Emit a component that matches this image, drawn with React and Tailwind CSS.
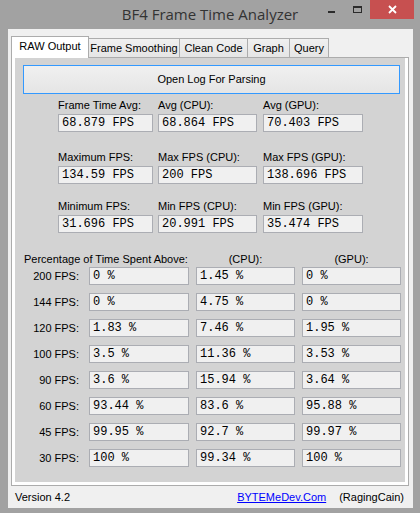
import React from 'react';

const STATS = [
  [
    ['Frame Time Avg:', '68.879 FPS'],
    ['Avg (CPU):', '68.864 FPS'],
    ['Avg (GPU):', '70.403 FPS'],
  ],
  [
    ['Maximum FPS:', '134.59 FPS'],
    ['Max FPS (CPU):', '200 FPS'],
    ['Max FPS (GPU):', '138.696 FPS'],
  ],
  [
    ['Minimum FPS:', '31.696 FPS'],
    ['Min FPS (CPU):', '20.991 FPS'],
    ['Min FPS (GPU):', '35.474 FPS'],
  ],
];

// spacing above each stats row
const ROW_MARGINS = ['mt-[3px]', 'mt-[17px]', 'mt-[14px]'];
const COL_WIDTHS = ['w-[95px]', 'w-[99px]', 'w-[100px]'];
const COL_GAPS = ['ml-[43px]', 'ml-[5px]', 'ml-[6px]'];

const PERCENTS = [
  ['200 FPS:', '0 %', '1.45 %', '0 %'],
  ['144 FPS:', '0 %', '4.75 %', '0 %'],
  ['120 FPS:', '1.83 %', '7.46 %', '1.95 %'],
  ['100 FPS:', '3.5 %', '11.36 %', '3.53 %'],
  ['90 FPS:', '3.6 %', '15.94 %', '3.64 %'],
  ['60 FPS:', '93.44 %', '83.6 %', '95.88 %'],
  ['45 FPS:', '99.95 %', '92.7 %', '99.97 %'],
  ['30 FPS:', '100 %', '99.34 %', '100 %'],
];

const TABS = [
  { name: 'Frame Smoothing', w: 'w-[92px]' },
  { name: 'Clean Code', w: 'w-[69px]' },
  { name: 'Graph', w: 'w-[43px]' },
  { name: 'Query', w: 'w-[40px]' },
];

function ReadBox({ value, className = '' }) {
  return (
    <div
      className={`h-[18px] flex items-center border border-[#abadb3] bg-[#f0f0f0] pl-[3px] font-['Liberation_Mono',monospace] text-[12px] text-black whitespace-pre ${className}`}
    >
      {value}
    </div>
  );
}

function WindowButtons() {
  return (
    <div className="absolute top-0 right-[6px] flex h-[19px]">
      <div className="w-[25px] flex justify-center">
        <div className="mt-[11px] w-[7px] h-[2px] bg-[#2b2b2b]"></div>
      </div>
      <div className="w-[26px] flex justify-center">
        <div className="mt-[6px] w-[9px] h-[7px] border border-t-2 border-[#2b2b2b]"></div>
      </div>
      <div className="w-[44px] h-[19px] bg-[#c75050] flex items-center justify-center">
        <svg width="9" height="9" viewBox="0 0 9 9">
          <path d="M1 1 L8 8 M8 1 L1 8" stroke="#fff" strokeWidth="1.8" />
        </svg>
      </div>
    </div>
  );
}

export default function App() {
  return (
    <div className="w-[420px] h-[513px] bg-[#a2a2a2] flex flex-col font-['Liberation_Sans',Arial,sans-serif] text-[11px] text-black">
      {/* Title bar */}
      <div className="relative h-[29px] flex justify-center">
        <div className="pt-[4px] text-[15px] leading-[20px] text-[#333] font-['Open_Sans','Noto_Sans',sans-serif]">
          BF4 Frame Time Analyzer
        </div>
        <WindowButtons />
      </div>

      {/* Client area */}
      <div className="ml-[8px] w-[405px] h-[479px] bg-[#f0f0f0] pt-[7px] flex flex-col">
        {/* Tab strip */}
        <div className="ml-[3px] h-[21px] flex items-end">
          <div className="relative z-10 w-[78px] h-[22px] -mb-px bg-white border border-b-0 border-[#acacac] flex items-center justify-center pb-[2px]">
            RAW Output
          </div>
          {TABS.map(tab => (
            <div
              key={tab.name}
              className={`${tab.w} h-[19px] -ml-px bg-gradient-to-b from-[#f0f0f0] to-[#e5e5e5] border border-b-0 border-[#acacac] flex items-center justify-center`}
            >
              {tab.name}
            </div>
          ))}
        </div>

        {/* Tab page */}
        <div className="ml-[3px] w-[398px] h-[429px] border border-[#acacac] bg-white px-[3px] pb-[3px]">
          <div className="h-full bg-[#d3d3d3] flex flex-col">
            <div className="ml-[8px] mt-[7px] w-[377px] h-[29px] border border-[#3399ff] bg-gradient-to-b from-[#f0f0f0] to-[#e5e5e5] flex items-center justify-center">
              Open Log For Parsing
            </div>

            {/* Averages / max / min */}
            {STATS.map((row, r) => (
              <div key={r} className={`flex ${ROW_MARGINS[r]}`}>
                {row.map(([label, value], c) => (
                  <div key={label} className={`${COL_WIDTHS[c]} ${COL_GAPS[c]} flex flex-col`}>
                    <div className="h-[16px] leading-[16px] whitespace-nowrap">{label}</div>
                    <ReadBox value={value} className="mt-px" />
                  </div>
                ))}
              </div>
            ))}

            {/* Time spent above thresholds */}
            <div className="flex mt-[18px] h-[16px] leading-[16px]">
              <div className="w-[174px] pl-[9px] whitespace-nowrap">Percentage of Time Spent Above:</div>
              <div className="w-[99px] ml-[7px] text-center">(CPU):</div>
              <div className="w-[99px] ml-[7px] text-center">(GPU):</div>
            </div>
            <div className="flex flex-col gap-[8px]">
              {PERCENTS.map(([label, a, b, c]) => (
                <div key={label} className="flex items-center">
                  <div className="w-[64px] text-right">{label}</div>
                  <ReadBox value={a} className="ml-[10px] w-[100px]" />
                  <ReadBox value={b} className="ml-[7px] w-[99px]" />
                  <ReadBox value={c} className="ml-[7px] w-[99px]" />
                </div>
              ))}
            </div>
          </div>
        </div>

        {/* Footer */}
        <div className="mt-[3px] pl-[7px] pr-[9px] h-[16px] leading-[16px] flex justify-between">
          <span>Version 4.2</span>
          <div className="flex gap-[13px]">
            <a href="#" className="text-[#0000ff] underline">BYTEMeDev.Com</a>
            <span>(RagingCain)</span>
          </div>
        </div>
      </div>
    </div>
  );
}
